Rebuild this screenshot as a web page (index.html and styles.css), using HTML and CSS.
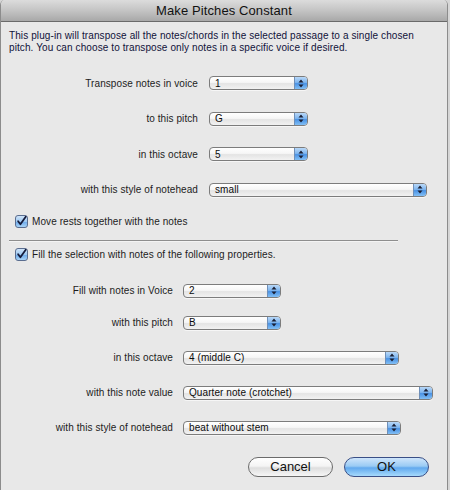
FILE: index.html
```html
<!DOCTYPE html>
<html>
<head>
<meta charset="utf-8">
<title>Make Pitches Constant</title>
<link rel="stylesheet" href="styles.css">
</head>
<body>
<div class="window">
  <div class="titlebar">Make Pitches Constant</div>
  <div class="content">
    <p class="desc">This plug-in will transpose all the notes/chords in the selected passage to a single chosen pitch. You can choose to transpose only notes in a specific voice if desired.</p>

    <div class="form form-a">
      <div class="row">
        <span class="label">Transpose notes in voice</span>
        <div class="popup w99"><span class="val">1</span><span class="stepper"><svg width="6" height="9" viewBox="0 0 6 9"><path d="M3 0.5 L5.5 3.5 L0.5 3.5 Z M3 8.5 L5.5 5.5 L0.5 5.5 Z" fill="#1b1f33"/></svg></span></div>
      </div>
      <div class="row">
        <span class="label">to this pitch</span>
        <div class="popup w99"><span class="val">G</span><span class="stepper"><svg width="6" height="9" viewBox="0 0 6 9"><path d="M3 0.5 L5.5 3.5 L0.5 3.5 Z M3 8.5 L5.5 5.5 L0.5 5.5 Z" fill="#1b1f33"/></svg></span></div>
      </div>
      <div class="row">
        <span class="label">in this octave</span>
        <div class="popup w99"><span class="val">5</span><span class="stepper"><svg width="6" height="9" viewBox="0 0 6 9"><path d="M3 0.5 L5.5 3.5 L0.5 3.5 Z M3 8.5 L5.5 5.5 L0.5 5.5 Z" fill="#1b1f33"/></svg></span></div>
      </div>
      <div class="row">
        <span class="label">with this style of notehead</span>
        <div class="popup w218"><span class="val">small</span><span class="stepper"><svg width="6" height="9" viewBox="0 0 6 9"><path d="M3 0.5 L5.5 3.5 L0.5 3.5 Z M3 8.5 L5.5 5.5 L0.5 5.5 Z" fill="#1b1f33"/></svg></span></div>
      </div>
    </div>

    <label class="check check-a"><span class="box"><svg width="13" height="13" viewBox="0 0 13 13"><path d="M2.5 6.2 L5.2 9.8 L11.5 0.8" fill="none" stroke="#141a3a" stroke-width="2.1" stroke-linecap="round" stroke-linejoin="round"/></svg></span><span>Move rests together with the notes</span></label>

    <div class="separator"></div>

    <label class="check check-b"><span class="box"><svg width="13" height="13" viewBox="0 0 13 13"><path d="M2.5 6.2 L5.2 9.8 L11.5 0.8" fill="none" stroke="#141a3a" stroke-width="2.1" stroke-linecap="round" stroke-linejoin="round"/></svg></span><span>Fill the selection with notes of the following properties.</span></label>

    <div class="form form-b">
      <div class="row">
        <span class="label">Fill with notes in Voice</span>
        <div class="popup w98"><span class="val">2</span><span class="stepper"><svg width="6" height="9" viewBox="0 0 6 9"><path d="M3 0.5 L5.5 3.5 L0.5 3.5 Z M3 8.5 L5.5 5.5 L0.5 5.5 Z" fill="#1b1f33"/></svg></span></div>
      </div>
      <div class="row tight">
        <span class="label">with this pitch</span>
        <div class="popup w98"><span class="val">B</span><span class="stepper"><svg width="6" height="9" viewBox="0 0 6 9"><path d="M3 0.5 L5.5 3.5 L0.5 3.5 Z M3 8.5 L5.5 5.5 L0.5 5.5 Z" fill="#1b1f33"/></svg></span></div>
      </div>
      <div class="row">
        <span class="label">in this octave</span>
        <div class="popup w216"><span class="val">4 (middle C)</span><span class="stepper"><svg width="6" height="9" viewBox="0 0 6 9"><path d="M3 0.5 L5.5 3.5 L0.5 3.5 Z M3 8.5 L5.5 5.5 L0.5 5.5 Z" fill="#1b1f33"/></svg></span></div>
      </div>
      <div class="row">
        <span class="label">with this note value</span>
        <div class="popup w250"><span class="val">Quarter note (crotchet)</span><span class="stepper"><svg width="6" height="9" viewBox="0 0 6 9"><path d="M3 0.5 L5.5 3.5 L0.5 3.5 Z M3 8.5 L5.5 5.5 L0.5 5.5 Z" fill="#1b1f33"/></svg></span></div>
      </div>
      <div class="row">
        <span class="label">with this style of notehead</span>
        <div class="popup w218"><span class="val">beat without stem</span><span class="stepper"><svg width="6" height="9" viewBox="0 0 6 9"><path d="M3 0.5 L5.5 3.5 L0.5 3.5 Z M3 8.5 L5.5 5.5 L0.5 5.5 Z" fill="#1b1f33"/></svg></span></div>
      </div>
    </div>

    <div class="buttons">
      <button class="btn cancel">Cancel</button>
      <button class="btn ok">OK</button>
    </div>
  </div>
</div>
</body>
</html>
```

FILE: styles.css
```css
html, body {
  margin: 0;
  padding: 0;
}
body {
  width: 450px;
  height: 490px;
  overflow: hidden;
  background: #d6d6d6;
  font-family: "Liberation Sans", Arial, sans-serif;
  color: #1a1a22;
  letter-spacing: 0.08px;
}
.window {
  width: 446px;
  height: 500px;
  border-left: 1px solid #8c8c8c;
  border-right: 1px solid #8c8c8c;
  border-radius: 5px 5px 0 0;
  background: #e8e8e8;
  overflow: hidden;
}
.titlebar {
  height: 21px;
  border-bottom: 1px solid #6a6a6a;
  background: linear-gradient(#dcdcdc, #c4c4c4 50%, #a8a8a8);
  text-align: center;
  font-size: 13px;
  line-height: 22px;
  color: #111;
  letter-spacing: 0.1px;
}
.content {
  padding: 0 0 0 8px;
}
.desc {
  margin: 8px 0 0 0;
  font-size: 10px;
  line-height: 12px;
  width: 418px;
  color: #10123a;
  letter-spacing: 0.1px;
}
.form {
  display: flex;
  flex-direction: column;
}
.form-a {
  margin-top: 22px;
}
.form-a .row + .row {
  margin-top: 21.5px;
}
.form-b {
  margin-top: 23px;
}
.form-b .row + .row {
  margin-top: 21px;
}
.form-b .row.tight {
  margin-top: 18px;
}
.row {
  display: flex;
  align-items: center;
  height: 14px;
}
.label {
  text-align: right;
  font-size: 10px;
  color: #1c1c1c;
  white-space: nowrap;
}
.form-a .label {
  width: 189px;
  margin-right: 11px;
}
.form-b .label {
  width: 164px;
  margin-right: 10px;
}
.popup {
  box-sizing: border-box;
  height: 14px;
  border: 1px solid #7c7c7c;
  border-radius: 4px;
  background: linear-gradient(#ffffff, #f6f6f6 45%, #e4e4e4 55%, #f2f2f2);
  display: flex;
  align-items: center;
  justify-content: space-between;
  font-size: 10px;
  color: #0c0c0c;
  box-shadow: 0 1px 0 rgba(255,255,255,0.6);
}
.val {
  padding-left: 5px;
  white-space: nowrap;
}
.stepper {
  width: 12px;
  height: 12px;
  border-left: 1px solid #6f8fb8;
  border-radius: 0 3px 3px 0;
  background: linear-gradient(#b9d8f8, #7fb6ef 45%, #4a92e4 55%, #82bff5);
  display: flex;
  align-items: center;
  justify-content: center;
}
.w98 { width: 98px; }
.w99 { width: 99px; }
.w216 { width: 216px; }
.w218 { width: 218px; }
.w250 { width: 250px; }
.check {
  display: flex;
  align-items: center;
  gap: 4px;
  font-size: 10px;
  color: #1c1c1c;
  padding-left: 6px;
  height: 13px;
}
.check-a {
  margin-top: 18px;
}
.check-b {
  margin-top: 6px;
}
.box {
  box-sizing: border-box;
  width: 13px;
  height: 13px;
  border: 1px solid #5a6d8f;
  border-radius: 3px;
  background: linear-gradient(#d0e4f9, #9ec9f2 50%, #6fabea 55%, #a8d3f7);
  display: flex;
  align-items: center;
  justify-content: center;
}
.box svg {
  display: block;
}
.separator {
  margin-top: 12px;
  width: 389px;
  height: 1px;
  background: #8e8e8e;
  border-bottom: 1px solid #f4f4f4;
  margin-bottom: 5px;
}
.buttons {
  display: flex;
  justify-content: flex-end;
  gap: 11px;
  margin-top: 22px;
  padding-right: 18px;
}
.btn {
  box-sizing: border-box;
  width: 85px;
  height: 20px;
  border-radius: 10px;
  font-family: "Liberation Sans", Arial, sans-serif;
  font-size: 13px;
  line-height: 18px;
  padding: 0;
  color: #111;
}
.cancel {
  border: 1px solid #6b6b6b;
  background: linear-gradient(#ffffff, #f4f4f4 45%, #dedede 55%, #f6f6f6);
}
.ok {
  border: 1px solid #3a4f86;
  background: linear-gradient(#cfe5fb, #9acbf4 45%, #62a9ee 55%, #a6dafc);
}
```
